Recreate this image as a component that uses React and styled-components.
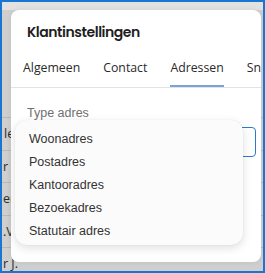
import React from "react";
import styled, { createGlobalStyle } from "styled-components";

const GlobalStyle = createGlobalStyle`
  html, body {
    margin: 0;
    padding: 0;
    overflow: hidden;
  }
`;

const Frame = styled.div`
  position: relative;
  width: 265px;
  height: 273px;
  box-sizing: border-box;
  border: 2px solid #1a76d2;
  background: #cfcfcf;
  overflow: hidden;
`;

const TopBar = styled.div`
  height: 8px;
  background: #e2e2e2;
`;

const Table = styled.div`
  display: flex;
  flex-direction: column;
  padding-top: 107px;
`;

const Row = styled.div`
  height: 32.5px;
  box-sizing: border-box;
  border-top: 1px solid #b9b9b9;
  display: flex;
  align-items: center;
  padding-left: ${({ $indent }) => $indent}px;
  font-family: "Open Sans", sans-serif;
  font-size: 12.5px;
  color: #2b2b2b;
  white-space: nowrap;
`;

const Dialog = styled.div`
  position: absolute;
  left: 9px;
  top: 8px;
  right: 2px;
  bottom: 9px;
  background: #fff;
  border-radius: 8px;
  box-shadow: 0 0 6px rgba(0, 0, 0, 0.08);
  display: flex;
  flex-direction: column;
`;

const Title = styled.h2`
  margin: 0;
  padding: 12px 0 0 16px;
  font-family: "Poppins", "Inter", sans-serif;
  font-weight: 600;
  font-size: 14px;
  letter-spacing: -0.45px;
  line-height: 20px;
  color: #1e1e1e;
`;

const Tabs = styled.div`
  display: flex;
  gap: 23px;
  padding-left: 12px;
  margin-top: 10px;
  border-bottom: 1px solid #e3e3e3;
  overflow: hidden;
  white-space: nowrap;
`;

const Tab = styled.div`
  font-family: "Open Sans", sans-serif;
  font-size: 12.3px;
  color: #2a2a2a;
  height: 35px;
  line-height: 32px;
  box-sizing: border-box;
  border-bottom: 2px solid ${({ $active }) => ($active ? "#7ea2d8" : "transparent")};
  flex-shrink: 0;
`;

const Body = styled.div`
  position: relative;
  padding: 17px 5px 0 16px;
`;

const Label = styled.div`
  font-family: "Liberation Sans", Arial, sans-serif;
  font-size: 12.5px;
  line-height: 16px;
  color: #6f6f6f;
`;

const Input = styled.div`
  margin-top: 6px;
  height: 30px;
  box-sizing: border-box;
  border: 1px solid #2f79c9;
  border-radius: 4px;
`;

const Menu = styled.ul`
  position: absolute;
  left: 4px;
  top: 32px;
  width: 228px;
  height: 125px;
  box-sizing: border-box;
  margin: 0;
  padding: 8px 0 2px;
  list-style: none;
  background: #fbfbfb;
  border-radius: 12px;
  box-shadow: 0 3px 10px rgba(0, 0, 0, 0.13), 0 0 1px rgba(0, 0, 0, 0.12);
`;

const Item = styled.li`
  height: 23px;
  line-height: 23px;
  padding-left: 14px;
  font-family: "Liberation Sans", Arial, sans-serif;
  font-size: 12.5px;
  color: #333;
`;

const rows = [
  { text: "le", indent: 2 },
  { text: "r F", indent: 1 },
  { text: "er-", indent: 1 },
  { text: ".V.", indent: 1 },
  { text: "r J.", indent: 1 },
];

const options = ["Woonadres", "Postadres", "Kantooradres", "Bezoekadres", "Statutair adres"];

export default function App() {
  return (
    <>
      <GlobalStyle />
      <Frame>
        <TopBar />
        <Table>
          {rows.map((r) => (
            <Row key={r.text} $indent={r.indent}>
              {r.text}
            </Row>
          ))}
        </Table>
        <Dialog>
          <Title>Klantinstellingen</Title>
          <Tabs>
            <Tab>Algemeen</Tab>
            <Tab>Contact</Tab>
            <Tab $active>Adressen</Tab>
            <Tab>Snelkoppelingen</Tab>
          </Tabs>
          <Body>
            <Label>Type adres</Label>
            <Input />
            <Menu>
              {options.map((o) => (
                <Item key={o}>{o}</Item>
              ))}
            </Menu>
          </Body>
        </Dialog>
      </Frame>
    </>
  );
}
